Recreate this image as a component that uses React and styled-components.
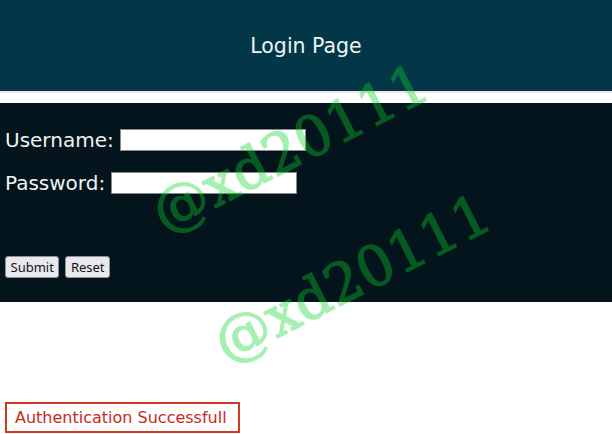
import React from "react";
import styled, { createGlobalStyle } from "styled-components";

const GlobalStyle = createGlobalStyle`
  html, body {
    margin: 0;
    padding: 0;
    background: #ffffff;
    font-family: "DejaVu Sans", "Liberation Sans", sans-serif;
  }
`;

const Page = styled.div`
  position: relative;
  width: 612px;
  height: 434px;
  overflow: hidden;
`;

const Header = styled.header`
  height: 91px;
  background: #033747;
  border-bottom: 2px solid #f9e0e4;
  display: flex;
  align-items: center;
  justify-content: center;
  color: #eef4f6;
  font-size: 20.5px;
`;

const FormPanel = styled.form`
  margin-top: 10px;
  height: 199px;
  box-sizing: border-box;
  padding: 26px 5px 0;
  background: #03141c;
  display: flex;
  flex-direction: column;
`;

const Row = styled.label`
  display: flex;
  align-items: center;
  gap: 6px;
  height: 22px;
  margin-bottom: ${(p) => p.$gap || 0}px;
  color: #f2f2f2;
  font-size: 20px;
`;

const TextInput = styled.input`
  width: 186px;
  height: 22px;
  box-sizing: border-box;
  margin: 0;
  border: 1px solid #8a8a8a;
  background: #ffffff;
`;

const ButtonBar = styled.div`
  display: flex;
  gap: 6px;
`;

const Button = styled.button`
  height: 22px;
  padding: 0 4.5px;
  margin: 0;
  border: 1px solid #8f8f9d;
  border-radius: 3px;
  background: #e9e9ed;
  color: #111;
  font-family: "Noto Sans", "Open Sans", sans-serif;
  font-size: 13px;
`;

const Message = styled.div`
  display: inline-block;
  margin: 100px 0 0 5px;
  padding: 4px 11px 4px 8px;
  border: 2px solid #d33a26;
  color: #c8281f;
  font-size: 16px;
`;

const Watermark = styled.div`
  position: absolute;
  left: ${(p) => p.$x}px;
  top: ${(p) => p.$y}px;
  transform: translate(-50%, -50%) rotate(-27deg);
  font-family: "DejaVu Serif", serif;
  font-size: 56px;
  white-space: nowrap;
  color: #0ad82a;
  -webkit-text-stroke: 1.3px #0ad82a;
  opacity: 0.36;
  pointer-events: none;
`;

export default function App() {
  return (
    <>
      <GlobalStyle />
      <Page>
        <Header>Login Page</Header>
        <FormPanel onSubmit={(e) => e.preventDefault()}>
          <Row $gap={21}>
            Username: <TextInput type="text" />
          </Row>
          <Row $gap={62}>
            Password: <TextInput type="password" />
          </Row>
          <ButtonBar>
            <Button type="submit">Submit</Button>
            <Button type="reset">Reset</Button>
          </ButtonBar>
        </FormPanel>
        <Message>Authentication Successfull</Message>
        <Watermark $x={290} $y={148}>@xd20111</Watermark>
        <Watermark $x={352} $y={278}>@xd20111</Watermark>
      </Page>
    </>
  );
}
